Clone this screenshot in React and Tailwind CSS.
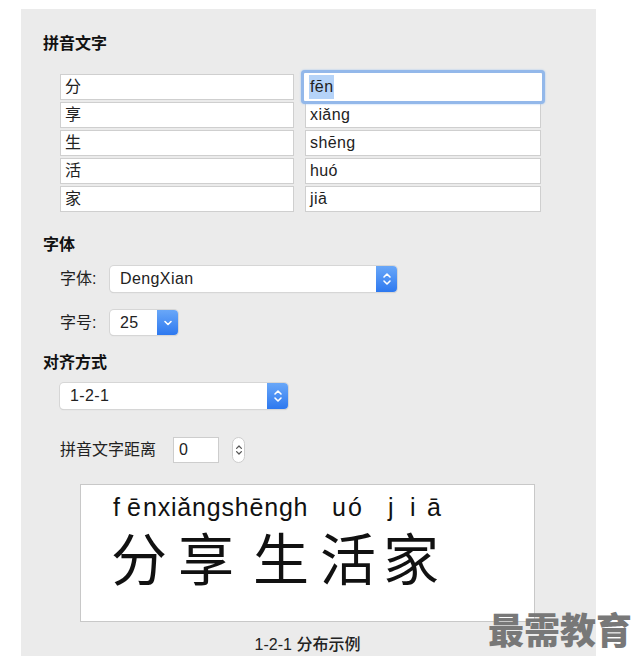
import React from "react";

const SANS = { fontFamily: '"Liberation Sans", "Noto Sans CJK SC", sans-serif' };
const CJK = { fontFamily: '"Noto Sans CJK SC", sans-serif' };

function Cell({ children, focused }) {
  if (focused) {
    return (
      <div className="relative h-[26px]">
        <div className="absolute -inset-[4px] rounded-[4px] border-[3px] border-[#93b8ea] bg-white shadow-[0_0_2px_#9cc0ee]" />
        <div className="relative h-full flex items-center pl-[4px] text-[16px] tracking-[0.4px] text-[#222]">
          <span className="bg-[#b5d3f8] px-[1px]">{children}</span>
        </div>
      </div>
    );
  }
  return (
    <div className="h-[26px] bg-white border border-[#cfcfcf] flex items-center pl-[4px] text-[16px] tracking-[0.4px] text-[#222]">
      {children}
    </div>
  );
}

function UpDown({ color = "white", w = 10 }) {
  return (
    <svg width={w} height="16" viewBox="0 0 10 16" fill="none" stroke={color} strokeWidth="1.6" strokeLinecap="round" strokeLinejoin="round">
      <path d="M2 6 L5 3 L8 6" />
      <path d="M2 10 L5 13 L8 10" />
    </svg>
  );
}

function Select({ value, width, height = 26, single }) {
  return (
    <div
      className="flex bg-white rounded-[4px] shadow-[0_0_0_1px_#d6d6d6,0_1px_1px_#c4c4c4]"
      style={{ width, height }}
    >
      <div className="flex-1 flex items-center pl-[10px] text-[16px] tracking-[0.4px] text-[#222]">{value}</div>
      <div className="w-[21px] rounded-r-[4px] bg-gradient-to-b from-[#69a7f8] to-[#2d78ef] flex items-center justify-center">
        {single ? (
          <svg width="10" height="8" viewBox="0 0 10 8" fill="none" stroke="white" strokeWidth="1.6" strokeLinecap="round" strokeLinejoin="round">
            <path d="M2 2.5 L5 5.5 L8 2.5" />
          </svg>
        ) : (
          <UpDown />
        )}
      </div>
    </div>
  );
}

export default function App() {
  const rows = [
    ["分", "fēn"],
    ["享", "xiǎng"],
    ["生", "shēng"],
    ["活", "huó"],
    ["家", "jiā"],
  ];
  const pinyin = [
    ["f", 14],
    ["ē", 16],
    ["nxiǎngshēngh", 189],
    ["u", 16],
    ["ó", 40],
    ["j", 22],
    ["i", 17],
    ["ā", 20],
  ];
  const hanzi = [
    ["分", 67],
    ["享", 75],
    ["生", 67],
    ["活", 63],
    ["家", 60],
  ];
  return (
    <div className="relative w-[640px] h-[670px] bg-white" style={SANS}>
      <div className="ml-[21px] pt-[9px]">
        <div className="w-[575px] h-[647px] bg-[#ebebeb] pl-[22px] flex flex-col">
          <div className="mt-[25px] text-[16px] leading-[20px] font-bold text-[#111]">拼音文字</div>

          <div className="mt-[20px] ml-[17px] grid grid-cols-[234px_236px] gap-x-[11px] gap-y-[2px]">
            {rows.map(([c, p], i) => (
              <React.Fragment key={i}>
                <Cell>{c}</Cell>
                <Cell focused={i === 0}>{p}</Cell>
              </React.Fragment>
            ))}
          </div>

          <div className="mt-[23px] text-[16px] leading-[20px] font-bold text-[#111]">字体</div>

          <div className="mt-[11px] ml-[17px] flex items-center">
            <div className="w-[50px] text-[16px] text-[#222]">字体:</div>
            <Select value="DengXian" width={287} />
          </div>

          <div className="mt-[18px] ml-[17px] flex items-center">
            <div className="w-[50px] text-[16px] text-[#222]">字号:</div>
            <Select value="25" width={68} height={25} single />
          </div>

          <div className="mt-[18px] text-[16px] leading-[20px] font-bold text-[#111]">对齐方式</div>

          <div className="mt-[10px] ml-[17px]">
            <Select value="1-2-1" width={228} />
          </div>

          <div className="mt-[28px] ml-[17px] flex items-center">
            <div className="w-[113px] text-[16px] text-[#222]">拼音文字距离</div>
            <div className="w-[46px] h-[26px] bg-white border border-[#cdcdcd] flex items-center pl-[5px] text-[16px] text-[#222]">0</div>
            <div className="ml-[13px] w-[13px] h-[26px] rounded-full bg-white border border-[#cdcdcd] flex items-center justify-center">
              <UpDown color="#555" w={8} />
            </div>
          </div>

          <div className="mt-[21px] ml-[37px] w-[455px] h-[138px] bg-white border border-[#c8c8c8] flex flex-col pl-[32px]">
            <div className="mt-[7px] flex text-[25px] leading-[30px] text-[#111] tracking-[0.8px] whitespace-nowrap">
              {pinyin.map(([t, w], i) => (
                <span key={i} className="shrink-0" style={{ width: w }}>{t}</span>
              ))}
            </div>
            <div className="mt-[4px] flex text-[56px] leading-[60px] text-[#111] -ml-[2px]" style={CJK}>
              {hanzi.map(([t, w], i) => (
                <span key={i} className="shrink-0" style={{ width: w }}>{t}</span>
              ))}
            </div>
          </div>

          <div className="mt-[13px] ml-[37px] w-[455px] text-center text-[16px] leading-[20px] font-medium text-[#222]">1-2-1 分布示例</div>
        </div>
      </div>

      <div
        className="absolute left-[488px] top-[607px] text-[36px] leading-[42px] font-black text-[#787878]"
        style={CJK}
      >
        最需教育
      </div>
    </div>
  );
}
